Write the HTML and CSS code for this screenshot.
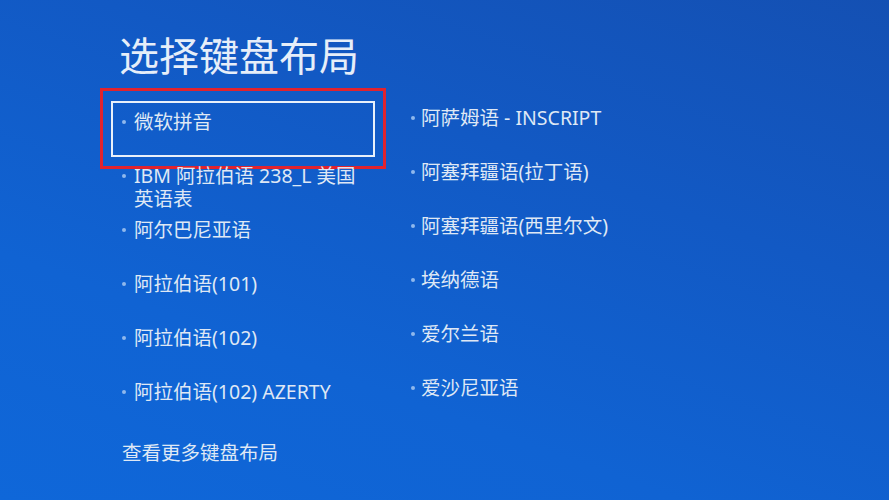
FILE: index.html
```html
<!DOCTYPE html>
<html lang="zh-CN">
<head>
<meta charset="utf-8">
<title>选择键盘布局</title>
<link rel="stylesheet" href="styles.css">
</head>
<body>
<main class="screen">
  <h1 class="title">选择键盘布局</h1>
  <div class="columns">
    <ul class="col col-left">
      <li class="item selected"><span class="dot"></span><span class="label">微软拼音</span><span class="mark"></span></li>
      <li class="item"><span class="dot"></span><span class="label">IBM 阿拉伯语 238_L 美国英语表</span></li>
      <li class="item"><span class="dot"></span><span class="label">阿尔巴尼亚语</span></li>
      <li class="item"><span class="dot"></span><span class="label">阿拉伯语(101)</span></li>
      <li class="item"><span class="dot"></span><span class="label">阿拉伯语(102)</span></li>
      <li class="item"><span class="dot"></span><span class="label">阿拉伯语(102) AZERTY</span></li>
    </ul>
    <ul class="col col-right">
      <li class="item"><span class="dot"></span><span class="label">阿萨姆语 - INSCRIPT</span></li>
      <li class="item"><span class="dot"></span><span class="label">阿塞拜疆语(拉丁语)</span></li>
      <li class="item"><span class="dot"></span><span class="label">阿塞拜疆语(西里尔文)</span></li>
      <li class="item"><span class="dot"></span><span class="label">埃纳德语</span></li>
      <li class="item"><span class="dot"></span><span class="label">爱尔兰语</span></li>
      <li class="item"><span class="dot"></span><span class="label">爱沙尼亚语</span></li>
    </ul>
  </div>
  <a class="more">查看更多键盘布局</a>
</main>
</body>
</html>
```

FILE: styles.css
```css
html, body {
  margin: 0;
  padding: 0;
  height: 100%;
}

body {
  background: linear-gradient(200deg, #1450b3 0%, #1259c4 35%, #1063d3 70%, #0f67d9 100%);
  font-family: "Noto Sans", "Noto Sans CJK SC", sans-serif;
  color: #dfe8f5;
  overflow: hidden;
}

.screen {
  padding: 34px 0 0 111px;
  display: flex;
  flex-direction: column;
  align-items: flex-start;
}

.title {
  margin: 0 0 0 8px;
  font-size: 40px;
  line-height: 44px;
  font-weight: 400;
  color: #e6eef9;
  height: 67px;
}

.columns {
  display: flex;
  gap: 25px;
}

.col {
  list-style: none;
  margin: 0;
  padding: 0;
  display: flex;
  flex-direction: column;
}

.col-left {
  width: 264px;
}

.col-right {
  width: 300px;
  margin-top: -4px;
}

.item {
  position: relative;
  box-sizing: border-box;
  height: 54px;
  padding: 9px 10px 0 11px;
  display: flex;
  align-items: flex-start;
  gap: 8px;
  font-size: 19.5px;
  line-height: 23px;
}

.col-right .item {
  gap: 6px;
}

.dot {
  flex: none;
  width: 4px;
  height: 4px;
  margin-top: 10px;
  border-radius: 50%;
  background: #8fb8ec;
}

.label {
  flex: 1;
  min-width: 0;
}

.selected {
  height: 56px;
  margin-bottom: -2px;
  border: 2px solid #e9f0fa;
  padding: 7px 10px 0 9px;
}

.mark {
  position: absolute;
  left: -13px;
  top: -15px;
  right: -13px;
  bottom: -14px;
  border: 3px solid #e1232e;
}

.more {
  margin: 16px 0 0 11px;
  font-size: 19.5px;
  line-height: 23px;
  color: #dfe8f5;
}
```
